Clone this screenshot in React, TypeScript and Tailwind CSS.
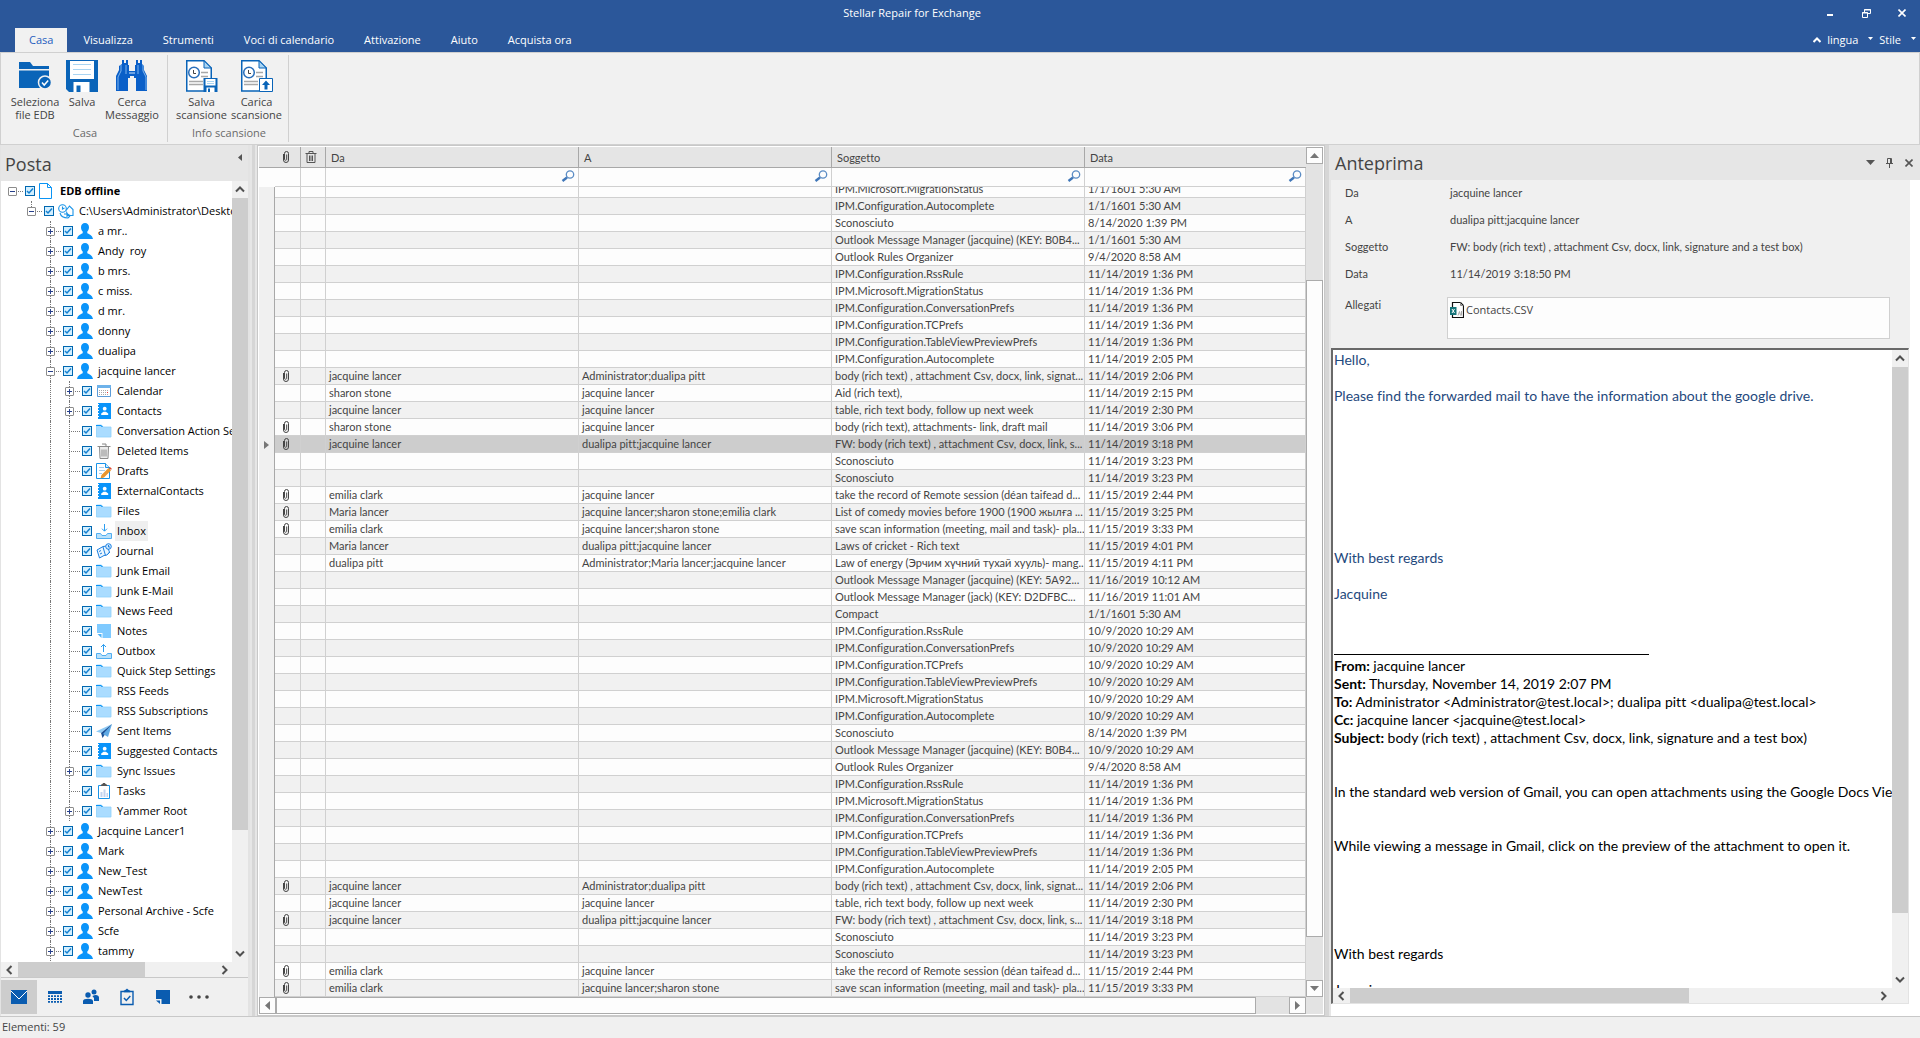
import React from 'react';

type IconName =
  | 'file' | 'exchange' | 'user' | 'calendar' | 'contacts' | 'folder' | 'trash' | 'drafts'
  | 'inbox' | 'outbox' | 'journal' | 'notes' | 'sent' | 'tasks';

type TreeNode = { level: number; label: string; icon: IconName; expander?: '+' | '-'; bold?: boolean; selected?: boolean };

const tree: TreeNode[] = [
  { level: 0, label: 'EDB offline', icon: 'file', expander: '-', bold: true },
  { level: 1, label: 'C:\\Users\\Administrator\\Desktop', icon: 'exchange', expander: '-' },
  { level: 2, label: 'a mr..', icon: 'user', expander: '+' },
  { level: 2, label: 'Andy  roy', icon: 'user', expander: '+' },
  { level: 2, label: 'b mrs.', icon: 'user', expander: '+' },
  { level: 2, label: 'c miss.', icon: 'user', expander: '+' },
  { level: 2, label: 'd mr.', icon: 'user', expander: '+' },
  { level: 2, label: 'donny', icon: 'user', expander: '+' },
  { level: 2, label: 'dualipa', icon: 'user', expander: '+' },
  { level: 2, label: 'jacquine lancer', icon: 'user', expander: '-' },
  { level: 3, label: 'Calendar', icon: 'calendar', expander: '+' },
  { level: 3, label: 'Contacts', icon: 'contacts', expander: '+' },
  { level: 3, label: 'Conversation Action Settings', icon: 'folder' },
  { level: 3, label: 'Deleted Items', icon: 'trash' },
  { level: 3, label: 'Drafts', icon: 'drafts' },
  { level: 3, label: 'ExternalContacts', icon: 'contacts' },
  { level: 3, label: 'Files', icon: 'folder' },
  { level: 3, label: 'Inbox', icon: 'inbox', selected: true },
  { level: 3, label: 'Journal', icon: 'journal' },
  { level: 3, label: 'Junk Email', icon: 'folder' },
  { level: 3, label: 'Junk E-Mail', icon: 'folder' },
  { level: 3, label: 'News Feed', icon: 'folder' },
  { level: 3, label: 'Notes', icon: 'notes' },
  { level: 3, label: 'Outbox', icon: 'outbox' },
  { level: 3, label: 'Quick Step Settings', icon: 'folder' },
  { level: 3, label: 'RSS Feeds', icon: 'folder' },
  { level: 3, label: 'RSS Subscriptions', icon: 'folder' },
  { level: 3, label: 'Sent Items', icon: 'sent' },
  { level: 3, label: 'Suggested Contacts', icon: 'contacts' },
  { level: 3, label: 'Sync Issues', icon: 'folder', expander: '+' },
  { level: 3, label: 'Tasks', icon: 'tasks' },
  { level: 3, label: 'Yammer Root', icon: 'folder', expander: '+' },
  { level: 2, label: 'Jacquine Lancer1', icon: 'user', expander: '+' },
  { level: 2, label: 'Mark', icon: 'user', expander: '+' },
  { level: 2, label: 'New_Test', icon: 'user', expander: '+' },
  { level: 2, label: 'NewTest', icon: 'user', expander: '+' },
  { level: 2, label: 'Personal Archive - Scfe', icon: 'user', expander: '+' },
  { level: 2, label: 'Scfe', icon: 'user', expander: '+' },
  { level: 2, label: 'tammy', icon: 'user', expander: '+' },
];

// [attachment, from, to, subject, date]
type Mail = [boolean, string, string, string, string];

const mails: Mail[] = [
  [false, '', '', 'IPM.Microsoft.MigrationStatus', '1/1/1601 5:30 AM'],
  [false, '', '', 'IPM.Configuration.Autocomplete', '1/1/1601 5:30 AM'],
  [false, '', '', 'Sconosciuto', '8/14/2020 1:39 PM'],
  [false, '', '', 'Outlook Message Manager (jacquine) (KEY: B0B4...', '1/1/1601 5:30 AM'],
  [false, '', '', 'Outlook Rules Organizer', '9/4/2020 8:58 AM'],
  [false, '', '', 'IPM.Configuration.RssRule', '11/14/2019 1:36 PM'],
  [false, '', '', 'IPM.Microsoft.MigrationStatus', '11/14/2019 1:36 PM'],
  [false, '', '', 'IPM.Configuration.ConversationPrefs', '11/14/2019 1:36 PM'],
  [false, '', '', 'IPM.Configuration.TCPrefs', '11/14/2019 1:36 PM'],
  [false, '', '', 'IPM.Configuration.TableViewPreviewPrefs', '11/14/2019 1:36 PM'],
  [false, '', '', 'IPM.Configuration.Autocomplete', '11/14/2019 2:05 PM'],
  [true, 'jacquine lancer', 'Administrator;dualipa pitt', 'body (rich text) , attachment Csv, docx, link, signat...', '11/14/2019 2:06 PM'],
  [false, 'sharon stone', 'jacquine lancer', 'Aid (rich text),', '11/14/2019 2:15 PM'],
  [false, 'jacquine lancer', 'jacquine lancer', 'table, rich text body, follow up next week', '11/14/2019 2:30 PM'],
  [true, 'sharon stone', 'jacquine lancer', 'body (rich text), attachments- link, draft mail', '11/14/2019 3:06 PM'],
  [true, 'jacquine lancer', 'dualipa pitt;jacquine lancer', 'FW: body (rich text) , attachment Csv, docx, link, s...', '11/14/2019 3:18 PM'],
  [false, '', '', 'Sconosciuto', '11/14/2019 3:23 PM'],
  [false, '', '', 'Sconosciuto', '11/14/2019 3:23 PM'],
  [true, 'emilia clark', 'jacquine lancer', 'take the record of Remote session (déan taifead d...', '11/15/2019 2:44 PM'],
  [true, 'Maria lancer', 'jacquine lancer;sharon stone;emilia clark', 'List of comedy movies before 1900 (1900 жылға ...', '11/15/2019 3:25 PM'],
  [true, 'emilia clark', 'jacquine lancer;sharon stone', 'save scan information (meeting, mail and task)- pla...', '11/15/2019 3:33 PM'],
  [false, 'Maria lancer', 'dualipa pitt;jacquine lancer', 'Laws of cricket - Rich text', '11/15/2019 4:01 PM'],
  [false, 'dualipa pitt', 'Administrator;Maria lancer;jacquine lancer', 'Law of energy (Эрчим хүчний тухай хууль)- mang...', '11/15/2019 4:11 PM'],
  [false, '', '', 'Outlook Message Manager (jacquine) (KEY: 5A92...', '11/16/2019 10:12 AM'],
  [false, '', '', 'Outlook Message Manager (jack) (KEY: D2DFBC...', '11/16/2019 11:01 AM'],
  [false, '', '', 'Compact', '1/1/1601 5:30 AM'],
  [false, '', '', 'IPM.Configuration.RssRule', '10/9/2020 10:29 AM'],
  [false, '', '', 'IPM.Configuration.ConversationPrefs', '10/9/2020 10:29 AM'],
  [false, '', '', 'IPM.Configuration.TCPrefs', '10/9/2020 10:29 AM'],
  [false, '', '', 'IPM.Configuration.TableViewPreviewPrefs', '10/9/2020 10:29 AM'],
  [false, '', '', 'IPM.Microsoft.MigrationStatus', '10/9/2020 10:29 AM'],
  [false, '', '', 'IPM.Configuration.Autocomplete', '10/9/2020 10:29 AM'],
  [false, '', '', 'Sconosciuto', '8/14/2020 1:39 PM'],
  [false, '', '', 'Outlook Message Manager (jacquine) (KEY: B0B4...', '10/9/2020 10:29 AM'],
  [false, '', '', 'Outlook Rules Organizer', '9/4/2020 8:58 AM'],
  [false, '', '', 'IPM.Configuration.RssRule', '11/14/2019 1:36 PM'],
  [false, '', '', 'IPM.Microsoft.MigrationStatus', '11/14/2019 1:36 PM'],
  [false, '', '', 'IPM.Configuration.ConversationPrefs', '11/14/2019 1:36 PM'],
  [false, '', '', 'IPM.Configuration.TCPrefs', '11/14/2019 1:36 PM'],
  [false, '', '', 'IPM.Configuration.TableViewPreviewPrefs', '11/14/2019 1:36 PM'],
  [false, '', '', 'IPM.Configuration.Autocomplete', '11/14/2019 2:05 PM'],
  [true, 'jacquine lancer', 'Administrator;dualipa pitt', 'body (rich text) , attachment Csv, docx, link, signat...', '11/14/2019 2:06 PM'],
  [false, 'jacquine lancer', 'jacquine lancer', 'table, rich text body, follow up next week', '11/14/2019 2:30 PM'],
  [true, 'jacquine lancer', 'dualipa pitt;jacquine lancer', 'FW: body (rich text) , attachment Csv, docx, link, s...', '11/14/2019 3:18 PM'],
  [false, '', '', 'Sconosciuto', '11/14/2019 3:23 PM'],
  [false, '', '', 'Sconosciuto', '11/14/2019 3:23 PM'],
  [true, 'emilia clark', 'jacquine lancer', 'take the record of Remote session (déan taifead d...', '11/15/2019 2:44 PM'],
  [true, 'emilia clark', 'jacquine lancer;sharon stone', 'save scan information (meeting, mail and task)- pla...', '11/15/2019 3:33 PM'],
];

const selectedMail = 15;

// Tree icons, 16x16
function TreeIcon({ name }: { name: IconName }) {
  return (
    <svg width="16" height="16" viewBox="0 0 16 16" fill="none" className="shrink-0">
      {name === 'file' && <path d="M.5.5h8l4 4v11H.5zM8.5.5v4h4" stroke="#0a94f5" fill="#fff" />}
      {name === 'exchange' && (
        <g stroke="#1a94e8" strokeWidth="1.1">
          <circle cx="4.5" cy="5.5" r="3.8" />
          <path d="M4.5 3.5v2.500l2-1M8 7.500l3.500-4.500 3.500 3.500v6h-5.500M8.500 8.500c0 2 2 4 4 4M2 10c1 4 4 5 8 5l2-2M6 11h3v3" />
        </g>
      )}
      {name === 'user' && (
        <path d="M8 0c2.400 0 4 1.700 4 4.200 0 1.800-.7 3.300-1.700 4.200v1.800c1.800 1 5 1.600 5.700 5.800H0c.7-4.200 3.900-4.800 5.700-5.800V8.400C4.700 7.500 4 6 4 4.200 4 1.700 5.600 0 8 0z" fill="#0a94fa" />
      )}
      {name === 'calendar' && (
        <g>
          <path d="M1.500 2.500h13v11h-13z" stroke="#5b9bd8" fill="#fff" />
          <path d="M1 2h14v3H1z" fill="#6eb2ea" />
          <path d="M3 7.500h10M3 9.500h10M3 11.500h10" stroke="#a9a9a9" strokeDasharray="1 1" />
          <path d="M11 9h1v1h-1z" fill="#e33" />
        </g>
      )}
      {name === 'contacts' && (
        <g>
          <path d="M2 0h13v16H2z" fill="#0a94fa" />
          <path d="M2 1.500h1M2 4.500h1M2 7.500h1M2 10.500h1M2 13.500h1" stroke="#fff" />
          <circle cx="8.700" cy="5.700" r="1.900" fill="#fff" />
          <path d="M5.200 12V10.500l2.300-1.700h2.400l2.300 1.700V12z" fill="#fff" />
        </g>
      )}
      {name === 'folder' && (
        <g>
          <path d="M.5 2h5l1.500 2h8v10H.5z" fill="#aadcff" stroke="#8fd0fb" strokeWidth=".8" />
          <path d="M0 3V2h5l1.500 1.500H7V4H5.500L5 3z" fill="#0a94f5" />
        </g>
      )}
      {name === 'trash' && (
        <g stroke="#8a8a8a">
          <path d="M1.500 3.500h13M6 1h4v2M3.500 4l.5 11.500h8L12.500 4" fill="#ececec" />
          <path d="M6 6.500v7M8 6.500v7M10 6.500v7" />
        </g>
      )}
      {name === 'drafts' && (
        <g>
          <path d="M.5.5h9l4 4v11H.5z" stroke="#1a94e8" fill="#fff" />
          <path d="M9.500.5v4h4" stroke="#1a94e8" fill="#cfeaff" />
          <path d="M3 4.500h5M3 7.500h6M3 10.500h3" stroke="#a8cdea" />
          <path d="M4.500 15.500l1-3.500 7-7 2.500 2.500-7 7z" fill="#e9962e" />
          <path d="M13 4.500L14 4l1.800 1.800-.8 1.200z" fill="#e0462e" />
        </g>
      )}
      {(name === 'inbox' || name === 'outbox') && (
        <g>
          <path d="M.5 10.500h4l1.500 2h4l1.500-2h4v5H.5z" fill="#b9e1fb" stroke="#52aef0" />
          {name === 'inbox'
            ? <path d="M8.500 1v7M6 5.700l2.500 2.500L11 5.700" stroke="#2b9df0" />
            : <path d="M7.500 9V1.500M5 4l2.500-2.500L10 4" stroke="#2b9df0" />}
        </g>
      )}
      {name === 'journal' && (
        <g stroke="#1c7fe0">
          <path d="M1 7l6-3.500 4-.5 2.500 6L11 12l-3 .5L3.500 15z" fill="#eaf6ff" />
          <path d="M7 4l2.500 8.500M3 8.500l2-1M4 11l2-1M12 11l2-2" />
          <circle cx="12.500" cy="3.500" r="2.800" fill="#cfeaff" />
          <path d="M12.500 2v2H14" />
        </g>
      )}
      {name === 'notes' && (
        <g>
          <path d="M1 1h14v14H6.500V10H1z" fill="#7fcaff" />
          <path d="M1.500 11h4v4z" fill="#4fb2f5" />
        </g>
      )}
      {name === 'sent' && (
        <g>
          <path d="M0 8.500L16 1 5 10z" fill="#8ecaf5" />
          <path d="M5 10L16 1 6.500 15z" fill="#1b4f94" />
          <path d="M7 11L16 1l-4 13z" fill="#5fa9e4" />
        </g>
      )}
      {name === 'tasks' && (
        <g>
          <path d="M2.500 2.500h11v13h-11z" fill="#fff" stroke="#1a94e8" />
          <path d="M5 2.500h6L9.500 1H9l-1-1-1 1h-.5z" fill="#555" stroke="#555" />
          <path d="M4.500 9h2v5h-2zM7.500 6.500h2V14h-2zM10.500 10h1.500v4h-1.500z" fill="#c3d3ef" />
        </g>
      )}
    </svg>
  );
}

function Clip() {
  return (
    <svg width="8" height="12" viewBox="0 0 8 12" fill="none" stroke="#444" strokeWidth="1" className="mx-auto block">
      <path d="M1.500 3v6a2.500 2.500 0 0 0 5 0V2.500a2 2 0 0 0-4 0" />
      <path d="M2.500 2.500V8.500a1.200 1.200 0 0 0 2.200 0V3.500" />
    </svg>
  );
}

function Magnifier() {
  return (
    <svg width="14" height="12" viewBox="0 0 14 12" fill="none" className="shrink-0">
      <circle cx="9" cy="4.500" r="3.700" stroke="#5b8cc4" strokeWidth="1.300" />
      <path d="M6 7.500L1.500 11" stroke="#3f76b8" strokeWidth="2.400" />
    </svg>
  );
}

function SaveDisk() {
  return (
    <svg width="32" height="32" viewBox="0 0 32 32">
      <path d="M0 0h32v32H3l-3-3z" fill="#0a64b8" />
      <path d="M4 1h24v18H4z" fill="#fff" />
      <path d="M7 4.500h18M7 9.500h18M7 14.500h18" stroke="#a9d4f2" />
      <path d="M7.500 22h16v10h-16z" fill="#fff" />
      <path d="M10.500 25.500h4V32h-4z" fill="#0a64b8" />
    </svg>
  );
}

function FolderCheck() {
  return (
    <svg width="32" height="32" viewBox="0 0 32 32">
      <path d="M0 2h11l3 4h16v3H0z" fill="#0a64b8" />
      <path d="M0 10.500h30V28H0z" fill="#0a64b8" />
      <circle cx="26" cy="22.500" r="6.500" fill="#0a64b8" stroke="#f1f1f1" strokeWidth="1.500" />
      <path d="M23 22.500l2.200 2.500 4-4.500" stroke="#fff" strokeWidth="1.500" fill="none" />
    </svg>
  );
}

function Binoculars() {
  return (
    <svg width="32" height="32" viewBox="0 0 32 32">
      <path d="M6 0h2v3h2V0h2v5h1v6h6V5h1V0h2v3h2V0h2v4l2 2v4l3 6v15H20V18h-2v-2h-4v2h-2v13H0V16l3-6V6l3-2z" fill="#0a5fc8" />
      <path d="M5 5v6l-3 6v13M27 5v6l3 6v13M10 5v9M22 5v9" stroke="#7db5ee" fill="none" />
      <path d="M13 13h6" stroke="#cfe6fb" />
    </svg>
  );
}

function ScanDoc({ load }: { load?: boolean }) {
  return (
    <svg width="32" height="32" viewBox="0 0 32 32" fill="none">
      <path d="M.75.75H18l7.250 7.250v23H.75z" fill="#fff" stroke="#0a64b8" strokeWidth="1.500" />
      <path d="M18 .75V8h7.250z" fill="#a9d4f2" stroke="#0a64b8" />
      <circle cx="8" cy="12.500" r="5.300" fill="#fff" stroke="#2a6fba" strokeWidth="1.500" />
      <path d="M7.500 10v3.500H10" stroke="#444" />
      <path d="M15 12.500h7M15 16.500h7M3 21.500h14M3 24.500h14" stroke="#a8a8a8" strokeWidth="1.300" />
      {load ? (
        <g>
          <path d="M18.500 18.500h13v13h-13z" fill="#fff" stroke="#0a64b8" />
          <path d="M25 20.500l4 4.500h-2.500v4.500h-3V25H21z" fill="#0a64b8" />
        </g>
      ) : (
        <g>
          <path d="M17.500 18h14v14h-14z" fill="#0a64b8" />
          <path d="M19.500 19h10v6.500h-10z" fill="#fff" />
          <path d="M21 21.500h7M21 23.500h7" stroke="#a9d4f2" />
          <path d="M20.500 27.500h8V32h-8z" fill="#fff" />
          <path d="M22 28.500h2V32h-2z" fill="#0a64b8" />
        </g>
      )}
    </svg>
  );
}

function RibbonButton({ label, width, children }: { label: string; width: string; children: React.ReactNode }) {
  return (
    <button className={`${width} flex flex-col items-center gap-[3px] text-center leading-[13px] text-[#444]`}>
      {children}
      <span className="whitespace-pre">{label}</span>
    </button>
  );
}

function RibbonGroup({ title, children }: { title: string; children: React.ReactNode }) {
  return (
    <div className="my-0.5 flex flex-col border-r border-[#d0d0d0] pl-1.5 pr-1 pt-[5px]">
      <div className="flex flex-1">{children}</div>
      <div className="pb-px text-center leading-4 text-[#6a6a6a]">{title}</div>
    </div>
  );
}

const chevrons = {
  up: 'M1 6.500L5 2.500l4 4',
  down: 'M1 2.500l4 4 4-4',
  left: 'M6.500 1L2.500 5l4 4',
  right: 'M2.500 1l4 4-4 4',
};

// Flat system scroll bar; before / thumb / after are shares of the track
function FlatScroll({ vertical, before = 0, thumb, after }: { vertical?: boolean; before?: number; thumb: number; after: number }) {
  const arrow = (d: string) => (
    <svg width="10" height="10" viewBox="0 0 10 10" fill="none" stroke="#505050" strokeWidth="2"><path d={d} /></svg>
  );
  return (
    <div className={vertical ? 'flex w-4 shrink-0 flex-col bg-[#f0f0f0]' : 'flex h-[15px] min-w-0 flex-1 bg-[#f0f0f0]'}>
      <span className={vertical ? 'flex h-[17px] items-center justify-center' : 'flex w-[17px] items-center justify-center'}>
        {arrow(vertical ? chevrons.up : chevrons.left)}
      </span>
      <span style={{ flexGrow: before }} />
      <span className="bg-[#cdcdcd]" style={{ flexGrow: thumb }} />
      <span style={{ flexGrow: after }} />
      <span className={vertical ? 'flex h-[17px] items-center justify-center' : 'flex w-[17px] items-center justify-center'}>
        {arrow(vertical ? chevrons.down : chevrons.right)}
      </span>
    </div>
  );
}

// Bordered scroll bar of the message list
function GridScroll({ vertical, before = 0, thumb, after }: { vertical?: boolean; before?: number; thumb: number; after: number }) {
  const box = 'flex size-[17px] shrink-0 items-center justify-center border border-[#ababab] bg-[#fdfdfd]';
  const arrow = (d: string) => <svg width="9" height="9" viewBox="0 0 9 9" fill="#777"><path d={d} /></svg>;
  return (
    <div className={vertical ? 'flex w-[17px] shrink-0 flex-col bg-[#e3e3e3]' : 'flex h-[17px] min-w-0 flex-1 bg-[#e3e3e3]'}>
      <span className={box}>{arrow(vertical ? 'M0 7l4.500-5L9 7z' : 'M7 0L2 4.500 7 9z')}</span>
      <span style={{ flexGrow: before }} />
      <span className="border border-[#ababab] bg-[#fdfdfd]" style={{ flexGrow: thumb }} />
      <span style={{ flexGrow: after }} />
      <span className={box}>{arrow(vertical ? 'M0 2l4.500 5L9 2z' : 'M2 0l5 4.500L2 9z')}</span>
    </div>
  );
}

function TreeRow({ node, first }: { node: TreeNode; first?: boolean }) {
  return (
    <li className="flex h-5 items-center pl-[7px]">
      {Array.from({ length: node.level }, (_, i) => (
        <span key={i} className="flex h-5 w-[19px] shrink-0 pl-1">
          {i === 2 && <span className="border-l border-dotted border-[#777]" />}
        </span>
      ))}
      <span className="relative flex h-5 w-[17px] shrink-0 items-center">
        {!first && node.level > 0 && (
          <span className={`absolute left-1 top-0 border-l border-dotted border-[#777] ${node.level === 1 ? 'h-2' : 'h-5'}`} />
        )}
        <span className="absolute left-1 right-0.5 top-[10px] border-t border-dotted border-[#777]" />
        {node.expander && (
          <button aria-label={`Espandi ${node.label}`} className="relative flex size-[9px] items-center justify-center rounded-[1px] border border-[#8c8c8c] bg-white">
            <svg width="5" height="5" viewBox="0 0 5 5" stroke="#27408b">
              <path d={node.expander === '+' ? 'M0 2.500h5M2.500 0v5' : 'M0 2.500h5'} />
            </svg>
          </button>
        )}
      </span>
      <label className="flex h-5 items-center">
        <span className="relative mr-1 flex size-[10px] shrink-0">
          <input type="checkbox" defaultChecked className="peer size-[10px] appearance-none border border-[#0067b0] bg-[#d3efff]" />
          <svg width="10" height="10" viewBox="0 0 10 10" fill="none" stroke="#1580d0" strokeWidth="1.500" className="pointer-events-none absolute inset-0 hidden peer-checked:block">
            <path d="M2 5l2 2 4-4.500" />
          </svg>
        </span>
        <TreeIcon name={node.icon} />
        <span className={`ml-[3px] h-5 whitespace-pre px-0.5 leading-5 ${node.bold ? 'font-bold' : ''} ${node.selected ? 'bg-[#efefef]' : ''}`}>
          {node.label}
        </span>
      </label>
    </li>
  );
}

const navIcons = [
  { label: 'Posta', icon: <g><path d="M0 1h16v14H0z" fill="#0a5cb0" /><path d="M0 2l8 8 8-8" stroke="#fff" fill="none" /></g> },
  { label: 'Calendario', icon: <g><path d="M1 2h14v3H1z" fill="#0a5cb0" /><path d="M1 7.200h14M1 10h14M1 12.800h14" stroke="#0a5cb0" strokeWidth="1.800" strokeDasharray="2 1" /></g> },
  {
    label: 'Contatti',
    icon: <g fill="#0a5cb0"><circle cx="5" cy="6" r="2.700" /><circle cx="11" cy="3" r="2.500" /><path d="M0 15v-3c0-3 10-3 10 0v3zM11 12V9c-1-1-1.500-2-1.500-2 3-2 6.500-1 6.500 1.500V12z" /></g>,
  },
  { label: 'Attività', icon: <g fill="none" stroke="#0a5cb0"><path d="M2 2.500h12v13H2z" strokeWidth="1.400" /><path d="M5 2.500h6l-2-1-1-1-1 1z" fill="#0a5cb0" strokeWidth="1.500" /><path d="M5 9l2.300 2.500 4-4.500" strokeWidth="1.500" /></g> },
  { label: 'Note', icon: <g fill="#0a5cb0"><path d="M1 1h14v14H6.500V10H1z" /><path d="M1 11.500h4V15z" /></g> },
  { label: 'Altro', icon: <g fill="#444"><circle cx="0" cy="8" r="1.800" /><circle cx="8" cy="8" r="1.800" /><circle cx="16" cy="8" r="1.800" /></g> },
];

const tabs = ['Visualizza', 'Strumenti', 'Voci di calendario', 'Attivazione', 'Aiuto', 'Acquista ora'];

const headerCell = 'h-[21px] border-b border-r border-[#a8a8a8] bg-[#e5e5e5] bg-clip-padding p-0 text-left font-normal';
const filterCell = 'h-[19px] border-b border-r border-[#d0d0d0] bg-[#fdfdfd] p-0';

function MailRow({ mail, index }: { mail: Mail; index: number }) {
  const [attachment, from, to, subject, date] = mail;
  const partial = index === 0;
  const bg = index === selectedMail ? 'bg-[#cdcdcd]' : index % 2 ? 'bg-[#f1f1f1]' : 'bg-[#fdfdfd]';
  const cell = `border-b border-r border-[#d0d0d0] p-0 ${bg}`;
  // the first row is scrolled half way under the filter row
  const box = partial
    ? 'flex h-[10px] items-end overflow-hidden whitespace-nowrap pl-[3px] leading-4'
    : 'h-4 overflow-hidden whitespace-nowrap pl-[3px] leading-4';
  return (
    <tr>
      <td className="border-r border-[#a8a8a8] bg-[#f0f0f0] p-0">
        {index === selectedMail && (
          <svg width="5" height="8" viewBox="0 0 5 8" fill="#777" className="mx-auto"><path d="M0 0l5 4-5 4z" /></svg>
        )}
      </td>
      <td className={cell}>{attachment && <div className="pr-1"><Clip /></div>}</td>
      <td className={cell}></td>
      <td className={cell}><div className={box}>{from}</div></td>
      <td className={cell}><div className={box}>{to}</div></td>
      <td className={cell}><div className={box}>{subject}</div></td>
      <td className={cell}><div className={box}>{date}</div></td>
    </tr>
  );
}

function FilterCell({ label }: { label: string }) {
  return (
    <td className={filterCell}>
      <div className="flex h-[18px] items-start pr-[3px] pt-0.5">
        <input aria-label={`Filtro ${label}`} className="h-4 min-w-0 flex-1 bg-transparent px-1 outline-none" />
        <Magnifier />
      </div>
    </td>
  );
}

function MailGrid() {
  return (
    <main className="flex min-w-0 flex-1 flex-col border border-[#c8c8c8] bg-white p-px font-['Lato','Liberation_Sans',sans-serif] text-[11px] text-[#444] [font-variant-ligatures:none]">
      <div className="flex min-h-0 flex-1">
        <div className="min-w-0 flex-1 overflow-hidden">
          <table className="w-full table-fixed border-separate border-spacing-0">
            <colgroup>
              <col className="w-4" />
              <col className="w-[26px]" />
              <col className="w-[25px]" />
              <col className="w-[253px]" />
              <col className="w-[253px]" />
              <col className="w-[253px]" />
              <col />
            </colgroup>
            <thead>
              <tr>
                <th className="h-[21px] border-b border-[#a8a8a8] bg-[#e5e5e5] p-0"></th>
                <th className={headerCell} aria-label="Allegato"><div className="pr-1"><Clip /></div></th>
                <th className={headerCell} aria-label="Eliminato">
                  <div className="pr-1">
                    <svg width="12" height="12" viewBox="0 0 12 12" fill="none" stroke="#555" className="mx-auto">
                      <path d="M.5 2.500h11M4 2.500v-2h4v2M2 3v8.500h8V3M4.500 4.500v5.500M6 4.500v5.500M7.500 4.500v5.500" />
                    </svg>
                  </div>
                </th>
                <th className={headerCell}><div className="pl-[5px] pt-0.5">Da</div></th>
                <th className={headerCell}><div className="pl-[5px] pt-0.5">A</div></th>
                <th className={headerCell}><div className="pl-[5px] pt-0.5">Soggetto</div></th>
                <th className="h-[21px] border-b border-[#a8a8a8] bg-[#e5e5e5] p-0 text-left font-normal"><div className="pl-[5px] pt-0.5">Data</div></th>
              </tr>
              <tr>
                <td className="h-[19px] bg-[#fdfdfd] p-0"></td>
                <td className={filterCell}></td>
                <td className={filterCell}></td>
                <FilterCell label="Da" />
                <FilterCell label="A" />
                <FilterCell label="Soggetto" />
                <FilterCell label="Data" />
              </tr>
            </thead>
            <tbody>
              {mails.map((mail, i) => <MailRow key={i} mail={mail} index={i} />)}
            </tbody>
          </table>
        </div>
        <GridScroll vertical before={116} thumb={657} after={43} />
      </div>
      <div className="flex bg-[#e3e3e3] pr-[17px]">
        <GridScroll thumb={981} after={33} />
      </div>
    </main>
  );
}

function Preview() {
  return (
    <aside className="flex w-[589px] shrink-0 flex-col bg-white text-[#444]">
      <div className="flex h-[35px] shrink-0 items-center bg-[#e6e6e6] pl-1 pr-0.5">
        <h2 className="flex-1 text-[18px] leading-6">Anteprima</h2>
        <button aria-label="Menu" className="flex w-[19px] justify-center"><svg width="9" height="5" viewBox="0 0 9 5" fill="#555"><path d="M0 0h9L4.500 5z" /></svg></button>
        <button aria-label="Blocca" className="flex w-[19px] justify-center">
          <svg width="7" height="10" viewBox="0 0 7 10" fill="none" stroke="#555"><path d="M1.500 5.500v-5h4v5M0 5.500h7M3.500 6v4M4.500.5v5" /></svg>
        </button>
        <button aria-label="Chiudi" className="flex w-[19px] justify-center"><svg width="8" height="8" viewBox="0 0 8 8" stroke="#555" strokeWidth="1.600"><path d="M.5.5l7 7M7.500.5l-7 7" /></svg></button>
      </div>
      <div className="mr-2.5 h-[168px] bg-[#f0f0f0] pl-3.5 pr-5 pt-px font-['Lato','Liberation_Sans',sans-serif] text-[11px] [font-variant-ligatures:none]">
        <dl className="grid grid-cols-[105px_1fr] auto-rows-[27px] leading-6">
          <dt>Da</dt>
          <dd>jacquine lancer</dd>
          <dt>A</dt>
          <dd>dualipa pitt;jacquine lancer</dd>
          <dt>Soggetto</dt>
          <dd>FW: body (rich text) , attachment Csv, docx, link, signature and a test box)</dd>
          <dt>Data</dt>
          <dd>11/14/2019 3:18:50 PM</dd>
        </dl>
        <div className="flex pt-2">
          <span className="w-[102px] leading-4">Allegati</span>
          <div className="flex h-[42px] flex-1 items-start gap-0.5 border border-[#d0d0d0] bg-[#fdfdfd] px-0.5 pt-1">
            <svg width="14" height="16" viewBox="0 0 14 16" fill="none">
              <path d="M2.500.5h8l3 3v12h-11z" fill="#fff" stroke="#111" strokeWidth="1.200" />
              <path d="M10.500.5v3h3" stroke="#888" />
              <path d="M0 5h6.500v8H0z" fill="#17757a" />
              <path d="M2 7l2.500 4M4.500 7L2 11" stroke="#fff" />
              <path d="M8 13.500l1.500-4 1 4M11.500 9v4.500" stroke="#aaa" />
            </svg>
            <span className="font-['Open_Sans',sans-serif] leading-4">Contacts.CSV</span>
          </div>
        </div>
      </div>
      <div className="mb-3 mr-[11px] flex min-h-0 flex-1 flex-col border border-[#e3e3e3] border-l-2 border-l-[#696969] border-t-2 border-t-[#696969]">
        <div className="flex min-h-0 flex-1">
          <article className="min-w-0 flex-1 overflow-hidden whitespace-nowrap pl-px pt-px font-['Lato',sans-serif] text-[14px] leading-[18px] text-black [font-variant-ligatures:none]">
            <div className="text-[#1f497d]">
              <p>Hello,</p>
              <p className="mt-[18px]">Please find the forwarded mail to have the information about the google drive.</p>
              <p className="mt-36">With best regards</p>
              <p className="mt-[18px]">Jacquine</p>
            </div>
            <hr className="mb-0.5 mt-[51px] w-[315px] border-black" />
            <p><b>From:</b> jacquine lancer</p>
            <p><b>Sent:</b> Thursday, November 14, 2019 2:07 PM</p>
            <p><b>To:</b> Administrator &lt;Administrator@test.local&gt;; dualipa pitt &lt;dualipa@test.local&gt;</p>
            <p><b>Cc:</b> jacquine lancer &lt;jacquine@test.local&gt;</p>
            <p><b>Subject:</b> body (rich text) , attachment Csv, docx, link, signature and a test box)</p>
            <p className="mt-9">In the standard web version of Gmail, you can open attachments using the Google Docs Viewer.</p>
            <p className="mt-9">While viewing a message in Gmail, click on the preview of the attachment to open it.</p>
            <p className="mt-[90px]">With best regards</p>
            <p className="mt-[18px]">Jacquine</p>
          </article>
          <FlatScroll vertical thumb={546} after={58} />
        </div>
        <div className="flex bg-[#f0f0f0] pr-4">
          <FlatScroll thumb={338} after={186} />
        </div>
      </div>
    </aside>
  );
}

export default function App() {
  return (
    <div className="flex h-screen flex-col overflow-hidden bg-[#f0f0f0] font-['Open_Sans',sans-serif] text-[11px] text-[#444]">
      <header className="shrink-0 bg-[#2b579a] text-white">
        <div className="flex h-7 items-center pb-0.5">
          <h1 className="flex-1 pl-3 text-center">Stellar Repair for Exchange</h1>
          <button aria-label="Riduci" className="flex w-9 justify-center"><svg width="6" height="10" viewBox="0 0 6 10"><path d="M0 6h6v2H0z" fill="#fff" /></svg></button>
          <button aria-label="Ripristina" className="flex w-9 justify-center">
            <svg width="9" height="9" viewBox="0 0 9 9" fill="none" stroke="#fff"><path d="M2.500 3V.5h6v4H6M.5 3.500h5v5h-5z" /><path d="M2 1h7M0 4h6" /></svg>
          </button>
          <button aria-label="Chiudi finestra" className="flex w-9 justify-center"><svg width="8" height="8" viewBox="0 0 8 8" stroke="#fff" strokeWidth="1.600"><path d="M.5.5l7 7M7.500.5l-7 7" /></svg></button>
        </div>
        <nav className="flex h-6 items-stretch gap-0.5 pl-[15px]">
          <button className="bg-[#f1f1f1] px-3.5 text-[#1f5fbf]">Casa</button>
          {tabs.map((tab) => <button key={tab} className="px-3.5">{tab}</button>)}
          <div className="ml-auto flex items-center gap-1.5 pr-1">
            <svg width="8" height="6" viewBox="0 0 8 6" fill="none" stroke="#fff" strokeWidth="2"><path d="M.5 5L4 1.500 7.500 5" /></svg>
            <button className="flex items-center gap-2.5">lingua<svg width="5" height="3" viewBox="0 0 5 3" fill="#fff" className="mb-1"><path d="M0 0h5L2.500 3z" /></svg></button>
            <button className="flex items-center gap-2.5">Stile<svg width="5" height="3" viewBox="0 0 5 3" fill="#fff" className="mb-1"><path d="M0 0h5L2.500 3z" /></svg></button>
          </div>
        </nav>
      </header>

      <section className="flex h-[93px] shrink-0 border border-[#d0d0d0] bg-[#f1f1f1]">
        <RibbonGroup title="Casa">
          <RibbonButton label={'Seleziona\nfile EDB'} width="w-14"><FolderCheck /></RibbonButton>
          <RibbonButton label="Salva" width="w-[38px]"><SaveDisk /></RibbonButton>
          <RibbonButton label={'Cerca\nMessaggio'} width="w-[62px]"><Binoculars /></RibbonButton>
        </RibbonGroup>
        <RibbonGroup title="Info scansione">
          <RibbonButton label={'Salva\nscansione'} width="w-[55px]"><ScanDoc /></RibbonButton>
          <RibbonButton label={'Carica\nscansione'} width="w-[55px]"><ScanDoc load /></RibbonButton>
        </RibbonGroup>
      </section>

      <div className="flex min-h-0 flex-1">
        <aside className="flex w-[250px] shrink-0 flex-col border-l border-r-2 border-[#e3e3e3] bg-[#f0f0f0]">
          <div className="flex h-9 shrink-0 items-center bg-[#e6e6e6] pl-1 pr-1.5">
            <h2 className="flex-1 pt-px text-[18px] leading-6">Posta</h2>
            <button aria-label="Comprimi" className="mb-3"><svg width="4" height="7" viewBox="0 0 4 7" fill="#555"><path d="M4 0v7L0 3.500z" /></svg></button>
          </div>
          <div className="flex min-h-0 flex-1">
            <ul className="min-w-0 flex-1 overflow-hidden bg-white text-black">
              {tree.map((node, i) => <TreeRow key={i} node={node} first={i === 0} />)}
            </ul>
            <FlatScroll vertical thumb={632} after={115} />
          </div>
          <div className="flex pr-[15px]">
            <FlatScroll thumb={127} after={71} />
          </div>
          <nav className="flex h-[39px] shrink-0 items-center border-t border-[#c8c8c8]">
            {navIcons.map((item, i) => (
              <button key={item.label} aria-label={item.label} className={`flex h-[34px] w-9 items-center justify-center ${i === 0 ? 'bg-[#cdcdcd]' : ''}`}>
                <svg width="16" height="16" viewBox="0 0 16 16" className="overflow-visible">{item.icon}</svg>
              </button>
            ))}
          </nav>
        </aside>
        <div className="w-[7px] shrink-0 border-x-2 border-[#e6e6e6] bg-[#d6d6d6]" />
        <MailGrid />
        <div className="w-1.5 shrink-0 border-r-2 border-[#e6e6e6] bg-[#d6d6d6]" />
        <Preview />
      </div>

      <footer className="flex h-[22px] shrink-0 items-center border-t border-[#c8c8c8] pl-0.5">Elementi: 59</footer>
    </div>
  );
}
